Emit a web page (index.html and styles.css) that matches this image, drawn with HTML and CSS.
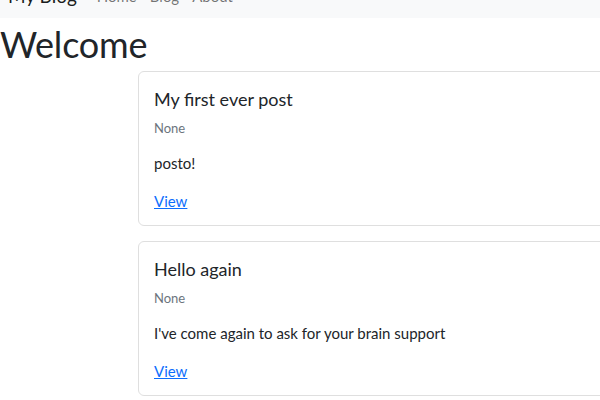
FILE: index.html
```html
<!DOCTYPE html>
<html lang="en">
<head>
<meta charset="utf-8">
<title>My Blog</title>
<link rel="stylesheet" href="styles.css">
</head>
<body>
<nav class="navbar">
  <a class="brand" href="#">My Blog</a>
  <a class="nav-link" href="#">Home</a>
  <a class="nav-link" href="#">Blog</a>
  <a class="nav-link" href="#">About</a>
</nav>
<main class="page">
  <h1 class="heading">Welcome</h1>
  <div class="posts">
    <div class="card">
      <div class="card-body">
        <h5 class="card-title">My first ever post</h5>
        <p class="card-subtitle">None</p>
        <p class="card-text">posto!</p>
        <a class="card-link" href="#">View</a>
      </div>
    </div>
    <div class="card">
      <div class="card-body">
        <h5 class="card-title">Hello again</h5>
        <p class="card-subtitle">None</p>
        <p class="card-text">I've come again to ask for your brain support</p>
        <a class="card-link" href="#">View</a>
      </div>
    </div>
  </div>
</main>
</body>
</html>
```
FILE: styles.css
```css
html, body {
  margin: 0;
  padding: 0;
  background: #fff;
  overflow: hidden;
}
body {
  font-family: Lato, "Open Sans", sans-serif;
  color: #212529;
  width: 600px;
  height: 400px;
}
.navbar {
  background: #f8f9fa;
  height: 18px;
  overflow: hidden;
  display: flex;
  align-items: flex-end;
  padding: 0 0 11px 8px;
  box-sizing: border-box;
}
.brand {
  font-size: 19px;
  line-height: 22px;
  color: #1a1d20;
  text-decoration: none;
  margin-right: 20px;
}
.nav-link {
  font-size: 15px;
  line-height: 22px;
  color: rgba(0,0,0,.55);
  text-decoration: none;
  margin-right: 13px;
}
.page {
  overflow: hidden;
}
.heading {
  font-size: 36px;
  font-weight: 400;
  line-height: 44px;
  margin: 4px 0 0 0;
  letter-spacing: -0.2px;
}
.posts {
  margin-left: 138px;
  width: 560px;
  display: flex;
  flex-direction: column;
  gap: 15px;
  margin-top: 5px;
}
.card {
  border: 1px solid #dfdfdf;
  border-radius: 6px;
  background: #fff;
}
.card-body {
  padding: 16px 15px 13px;
  display: flex;
  flex-direction: column;
  align-items: flex-start;
}
.card-title {
  font-size: 18px;
  font-weight: 400;
  line-height: 22px;
  margin: 0;
}
.card-subtitle {
  font-size: 13px;
  line-height: 20px;
  color: #6c757d;
  margin: 8px 0 0;
}
.card-text {
  font-size: 15px;
  line-height: 22px;
  margin: 14px 0 0;
}
.card-link {
  font-size: 15px;
  line-height: 22px;
  color: #0d6efd;
  margin-top: 16px;
  text-decoration: underline;
}
```
